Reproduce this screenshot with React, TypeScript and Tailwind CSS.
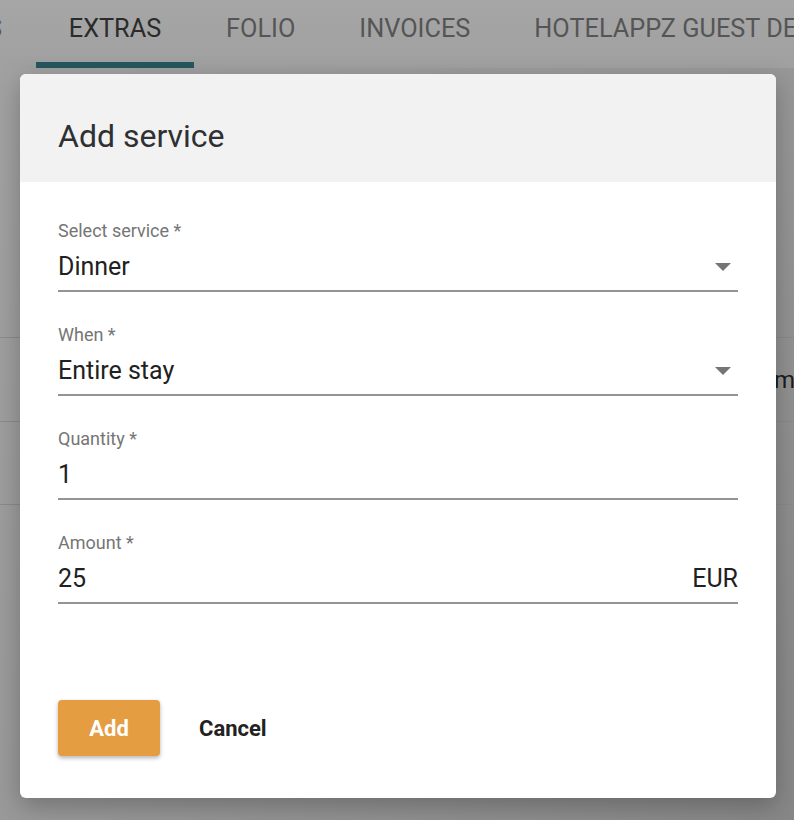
import React from 'react';

const font = { fontFamily: 'Roboto, "Liberation Sans", sans-serif' };

const Caret: React.FC = () => (
  <svg width="16" height="8" viewBox="0 0 16 8" className="shrink-0">
    <path d="M0 0 L16 0 L8 8 Z" fill="#757575" />
  </svg>
);

type FieldProps = {
  label: string;
  value: string;
  select?: boolean;
  suffix?: string;
};

const Field: React.FC<FieldProps> = ({ label, value, select, suffix }) => (
  <div className="flex flex-col">
    <label className="text-[18px] leading-[20px] text-[#757575]">{label}</label>
    <div className="h-[51px] flex items-end justify-between border-b-2 border-[#949494] pb-[8px]">
      <span className="text-[25px] leading-[30px] text-[#212121]">{value}</span>
      {select && (
        <div className="h-[30px] flex items-center pr-[7px]">
          <Caret />
        </div>
      )}
      {suffix && <span className="text-[25px] leading-[30px] text-[#212121]">{suffix}</span>}
    </div>
  </div>
);

const App: React.FC = () => {
  return (
    <div
      className="relative w-[794px] h-[820px] overflow-hidden bg-gradient-to-br from-[#a2a2a2] via-[#999999] to-[#878787]"
      style={font}
    >
      {/* page behind the dialog */}
      <div className="flex h-[68px] items-stretch bg-gradient-to-b from-[#a6a6a6] to-[#a0a0a0] whitespace-nowrap text-[25.3px]">
        <div className="shrink-0 -ml-[13px] w-[49px] flex items-center pb-[10px] text-[#555]">S</div>
        <div className="shrink-0 relative w-[158px] flex items-center justify-center pb-[10px] text-[#2b2b2b]">
          EXTRAS
          <div className="absolute bottom-0 left-0 right-0 h-[6px] bg-[#26565e]" />
        </div>
        <div className="shrink-0 px-[32px] flex items-center pb-[10px] text-[#555]">FOLIO</div>
        <div className="shrink-0 px-[32px] flex items-center pb-[10px] text-[#555]">INVOICES</div>
        <div className="shrink-0 px-[32px] flex items-center pb-[10px] text-[#555]">HOTELAPPZ GUEST DETAILS</div>
      </div>

      <div className="mt-[269px] border-t border-[#8a8a8a]" />
      <div className="h-[83px] flex items-center pl-[774px] text-[24px] text-[#1c1c1c] whitespace-nowrap">mea</div>
      <div className="border-t border-[#8a8a8a]" />
      <div className="h-[82px]" />
      <div className="border-t border-[#8a8a8a]" />

      {/* dialog */}
      <div className="absolute left-[20px] top-[74px] w-[756px] h-[724px] rounded-[6px] bg-white overflow-hidden shadow-[0_8px_24px_rgba(0,0,0,0.25)] flex flex-col">
        <div className="h-[108px] bg-[#f2f2f2] flex items-center px-[38px] pt-[16px]">
          <h2 className="text-[32px] text-[#2f3033]">Add service</h2>
        </div>

        <div className="px-[38px] pt-[39px] flex flex-col gap-[33px]">
          <Field label="Select service *" value="Dinner" select />
          <Field label="When *" value="Entire stay" select />
          <Field label="Quantity *" value="1" />
          <Field label="Amount *" value="25" suffix="EUR" />
        </div>

        <div className="mt-auto mb-[42px] px-[38px] flex items-center gap-[39px]">
          <button className="w-[102px] h-[56px] rounded-[4px] bg-[#e59d42] text-white text-[22px] font-bold shadow-[0_2px_4px_rgba(0,0,0,0.3)]">
            Add
          </button>
          <button className="text-[22px] font-bold text-[#222]">Cancel</button>
        </div>
      </div>
    </div>
  );
};

export default App;
